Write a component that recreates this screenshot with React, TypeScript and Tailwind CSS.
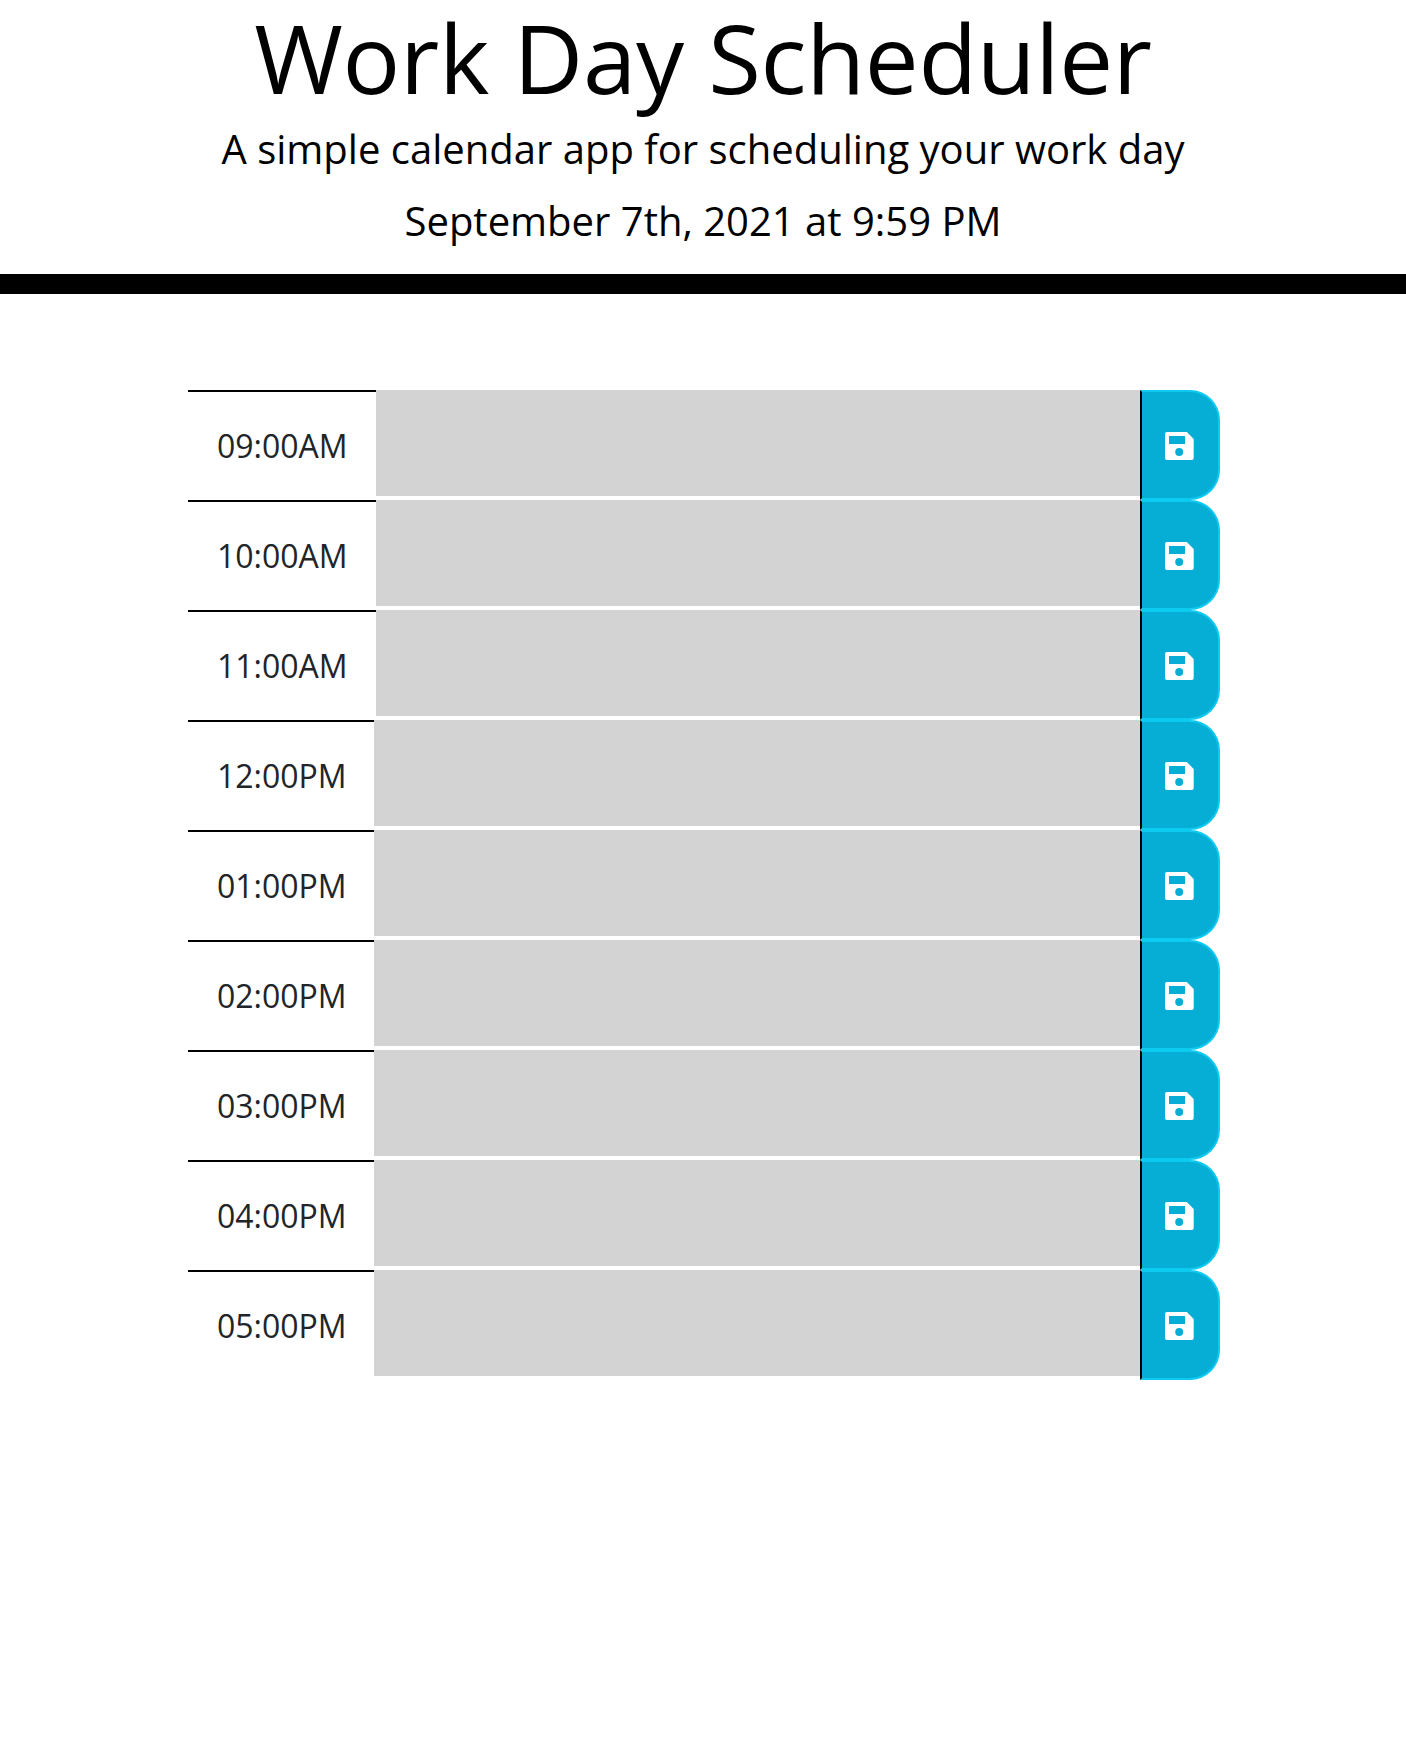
const hours = [
  '09:00AM',
  '10:00AM',
  '11:00AM',
  '12:00PM',
  '01:00PM',
  '02:00PM',
  '03:00PM',
  '04:00PM',
  '05:00PM',
];

function SaveIcon() {
  return (
    <svg width="29" height="28" viewBox="0 0 29 28" fill="none" aria-hidden="true">
      <path
        fill="#fff"
        fillRule="evenodd"
        d="M2 0H21.8L28.7 6.9V26Q28.7 28 26.7 28H2Q0 28 0 26V2Q0 0 2 0ZM4 4V12H20V4ZM14.2 16A4 4 0 1 0 14.2 24A4 4 0 1 0 14.2 16Z"
      />
    </svg>
  );
}

function TimeBlock({ label }: { label: string }) {
  const width = label.endsWith('AM') ? 'w-[188px]' : 'w-[186px]';
  return (
    <div className="flex h-[110px]">
      <div
        className={`${width} flex shrink-0 items-center border-t-2 border-black pb-px pl-[29px] text-[32px] leading-[48px] text-[#212529]`}
      >
        {label}
      </div>
      <textarea
        aria-label={label}
        className="block h-[106px] min-w-0 flex-1 resize-none bg-[#d3d3d3] p-2 text-[32px] outline-none"
      />
      <button
        aria-label="Save"
        className="flex h-[110px] w-20 shrink-0 items-center rounded-r-[30px] border-2 border-[#0dcaf0] border-l-black bg-[#06aed5] pl-[23px] pt-[2px]"
      >
        <SaveIcon />
      </button>
    </div>
  );
}

export default function App() {
  return (
    <div className="min-h-[1746px] bg-white font-['Open_Sans',sans-serif]">
      <header className="h-[294px] border-b-[20px] border-black text-center text-black">
        <h1 className="text-[96px] leading-[113px] tracking-[-0.33px]">Work Day Scheduler</h1>
        <p className="mt-[5px] text-[40px] leading-[61px]">
          A simple calendar app for scheduling your work day
        </p>
        <p className="mt-[11px] text-[40px] leading-[61px]">September 7th, 2021 at 9:59 PM</p>
      </header>
      <main className="ml-[188px] mt-24 w-[1032px]">
        {hours.map((label) => (
          <TimeBlock key={label} label={label} />
        ))}
      </main>
    </div>
  );
}
